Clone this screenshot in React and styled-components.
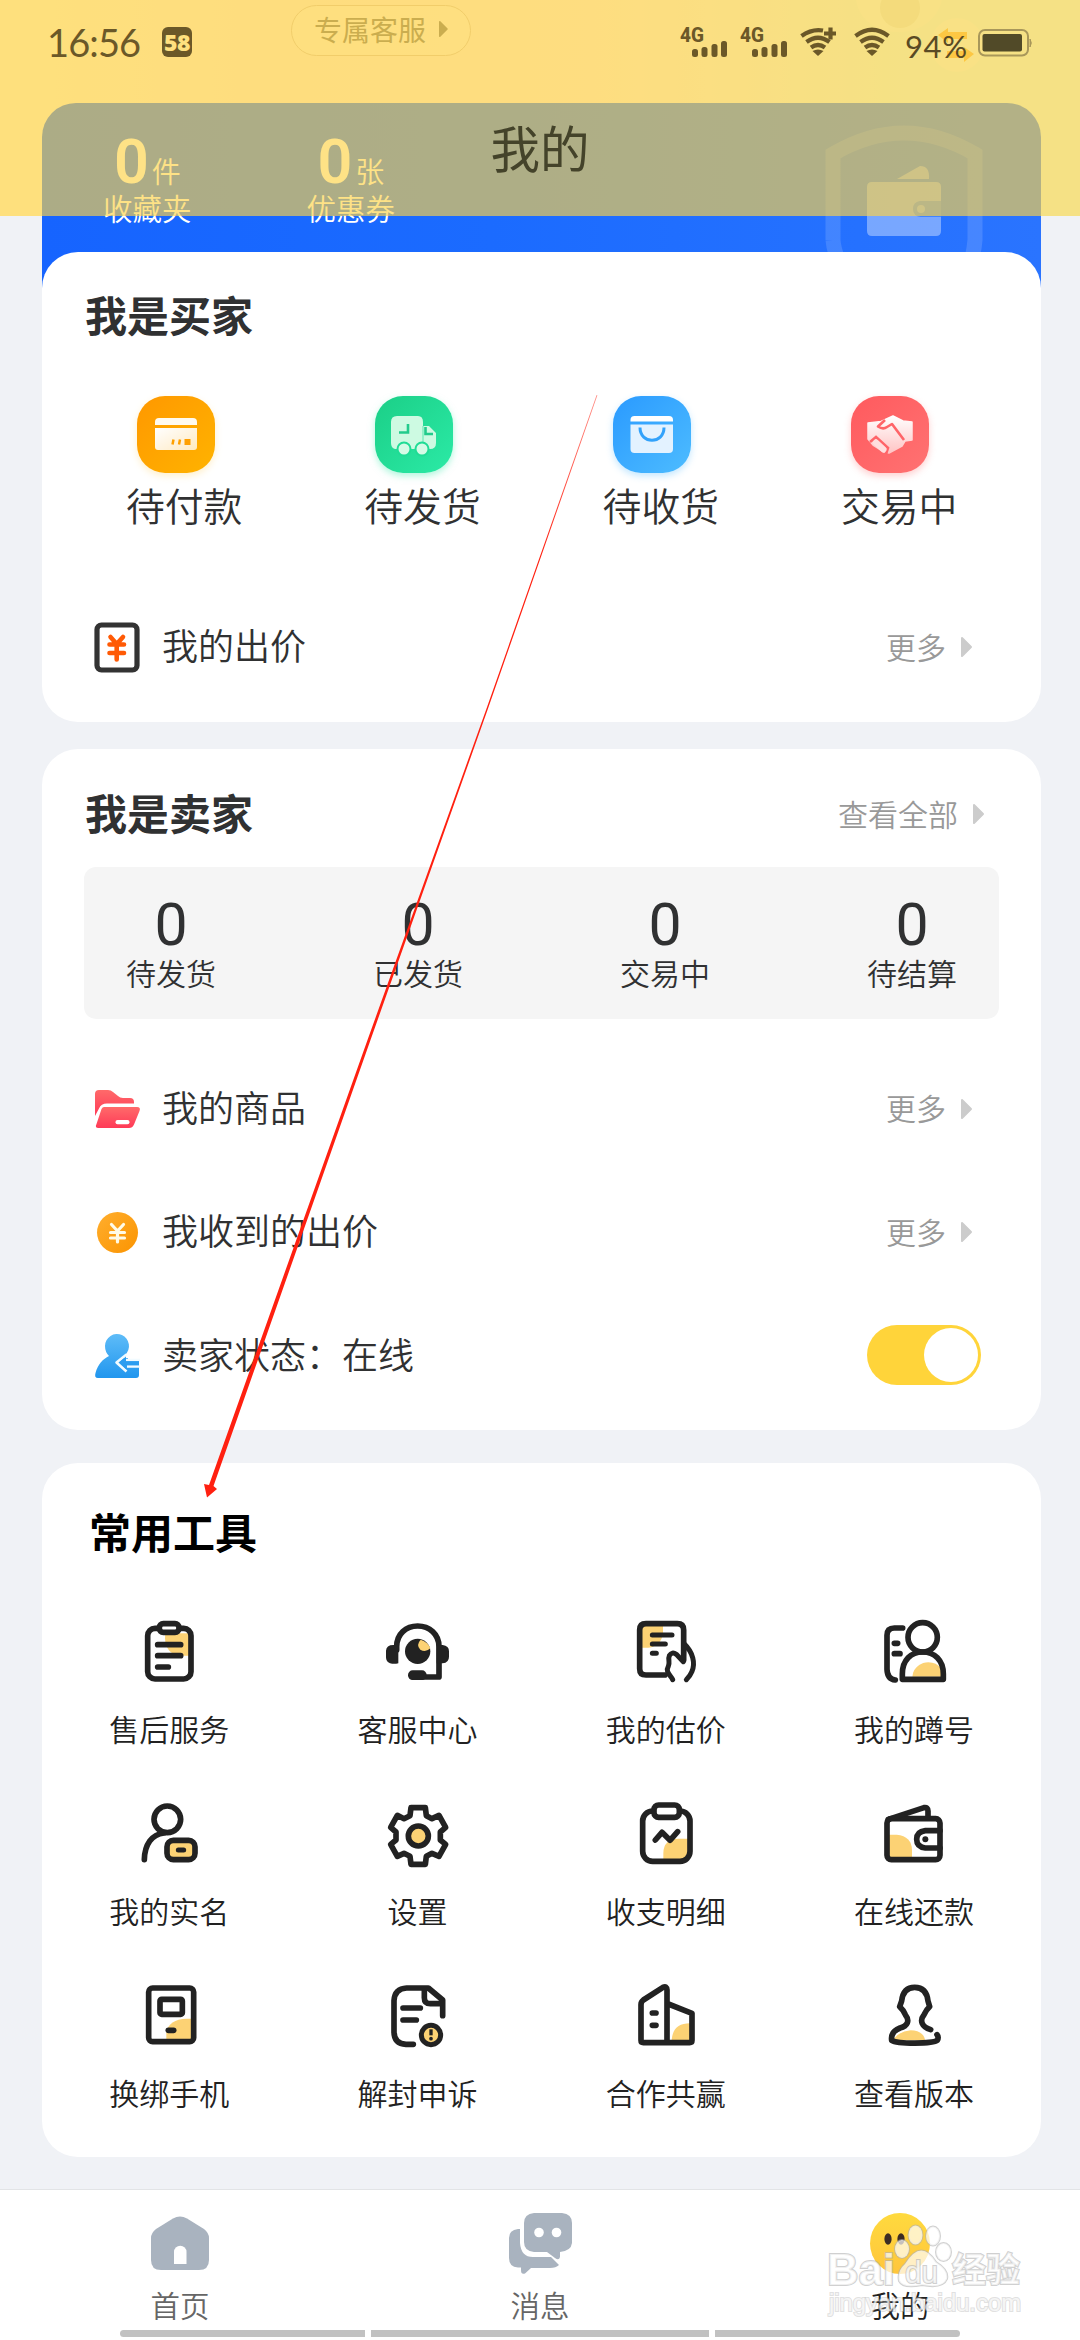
import React from "react";
import styled, { createGlobalStyle } from "styled-components";

const GlobalStyle = createGlobalStyle`
  *, *::before, *::after { box-sizing: border-box; }
  html, body { margin: 0; padding: 0; background: #f0f2f6; }
  body { font-family: "Noto Sans CJK SC", sans-serif; font-weight: 350; color: #303132; }
  svg { display: block; flex: none; overflow: visible; }
`;

const Page = styled.div`
  position: relative;
  width: 1080px;
  height: 2340px;
  overflow: hidden;
  display: flex;
  flex-direction: column;
  background: #f0f2f6;
`;

/* ---------- hero behind the translucent header ---------- */

const Hero = styled.section`
  flex: none;
  height: 252px;
  display: flex;
  flex-direction: column;
  align-items: flex-start;
  padding-top: 5px;
  background: linear-gradient(90deg, #fffae5 0%, #fff1e8 22%, #fff1ed 55%, #e4fcfb 84%, #e4fcfb 100%) 0 0 / 100% 216px no-repeat;
`;

const ServicePill = styled.div`
  height: 51px;
  width: 180px;
  margin-left: 291px;
  padding-bottom: 3px;
  flex: none;
  display: flex;
  align-items: center;
  justify-content: center;
  gap: 13px;
  border-radius: 26px;
  border: 1px solid #d9c3b0;
  background: rgba(255, 255, 240, 0.35);
  font-size: 28px;
  font-weight: 400;
  line-height: 40px;
  color: #6c6862;
  white-space: nowrap;
`;

const CoinArt = styled.svg`
  position: absolute;
  left: 840px;
  top: 0;
`;

const BlueCard = styled.div`
  flex: none;
  position: relative;
  width: 999px;
  height: 190px;
  margin: 47px 0 0 42px;
  padding: 30px 0 0 46px;
  display: flex;
  border-radius: 34px 34px 0 0;
  background: linear-gradient(90deg, #1664ff, #1b6bff 45%, #2a74ff);
  color: #fff;
`;

const ShieldArt = styled.svg`
  position: absolute;
  left: 783px;
  top: 20px;
`;

const Counter = styled.div`
  width: 203.5px;
  display: flex;
  flex-direction: column;
  padding-left: 15px;
`;

const CounterValue = styled.div`
  display: flex;
  align-items: baseline;
  gap: 3px;
  height: 57px;
  line-height: 58px;
  padding-left: 11px;
  font-size: 29px;
`;

const BigZero = styled.span`
  font: 600 61px/58px Roboto, sans-serif;
`;

const CounterLabel = styled.div`
  font-size: 29.5px;
  line-height: 34px;
`;

/* ---------- translucent header ---------- */

const Header = styled.header`
  position: absolute;
  inset: 0 0 auto 0;
  height: 216px;
  z-index: 5;
  display: flex;
  flex-direction: column;
  background: rgba(253, 210, 69, 0.65);
`;

const StatusBar = styled.div`
  height: 84px;
  display: flex;
  align-items: center;
  padding: 0 48px 0 47px;
  color: #6b5828;
`;

const Clock = styled.div`
  width: 115px;
  font: 400 38px/44px Lato, sans-serif;
  letter-spacing: -0.9px;
`;

const SpeedBadge = styled.div`
  width: 30px;
  height: 30px;
  border-radius: 6px;
  background: #6b5828;
  color: #ffe07f;
  font: 800 23px/31px "Open Sans", sans-serif;
  text-align: center;
  letter-spacing: -0.5px;
`;

const StatusRight = styled.div`
  margin-left: auto;
  display: flex;
  align-items: center;
`;

const BatteryText = styled.div`
  width: 73px;
  margin-left: -3px;
  padding-top: 7px;
  font: 400 31px/38px Lato, sans-serif;
  letter-spacing: 0.6px;
  white-space: nowrap;
  color: #5a4a24;
`;

const HeaderTitle = styled.h1`
  margin: 27px 0 0;
  font-size: 49.5px;
  line-height: 72px;
  font-weight: 400;
  text-align: center;
  color: #44432a;
`;

/* ---------- cards ---------- */

const Card = styled.section`
  position: relative;
  flex: none;
  width: 999px;
  height: ${(p) => p.$height}px;
  margin: ${(p) => p.$gap}px 0 0 42px;
  border-radius: 36px;
  background: #fff;
`;

const CardHead = styled.div`
  height: ${(p) => p.$height}px;
  display: flex;
  align-items: center;
  justify-content: space-between;
  padding: 0 57px 0 ${(p) => p.$left || 43}px;
`;

const CardTitle = styled.h2`
  margin: 0;
  padding-bottom: 5px;
  font-size: 42px;
  line-height: 60px;
  font-weight: 700;
  color: ${(p) => (p.$strong ? "#000" : "#303132")};
`;

const More = styled.span`
  display: flex;
  align-items: center;
  gap: 15px;
  font-size: 30px;
  line-height: 44px;
  color: #999;
`;

const MoreText = styled.span`
  padding-bottom: 3px;
`;

const OrderGrid = styled.div`
  display: grid;
  grid-template-columns: repeat(4, 238.3px);
  padding: 16px 0 0 84px;
`;

const OrderItem = styled.div`
  display: flex;
  flex-direction: column;
  align-items: flex-start;
  font-size: 38.8px;
  line-height: 56px;
`;

const OrderTile = styled.div`
  width: 78px;
  height: 77px;
  margin: 0 0 3px 10.5px;
  border-radius: 28px;
  background: linear-gradient(135deg, ${(p) => p.$from}, ${(p) => p.$to});
  box-shadow: 0 3px 7px ${(p) => p.$glow};
`;

const Row = styled.div`
  height: ${(p) => p.$height || 123.5}px;
  display: flex;
  align-items: center;
  padding: 0 ${(p) => p.$right || 69}px 0 50px;
`;

const RowIcon = styled.div`
  width: 50px;
  display: flex;
  justify-content: center;
  margin-right: 20px;
`;

const RowText = styled.div`
  flex: 1;
  padding-bottom: 6px;
  font-size: 36px;
  line-height: 52px;
`;

const Stats = styled.div`
  width: 915px;
  height: 152px;
  margin: -12px 0 28px 42px;
  padding: 30px 42px 0;
  display: flex;
  justify-content: space-between;
  border-radius: 12px;
  background: #f5f5f5;
`;

const Stat = styled.div`
  width: 90px;
  display: flex;
  flex-direction: column;
  align-items: center;
  font-size: 30px;
  line-height: 38px;
  white-space: nowrap;
`;

const StatValue = styled.div`
  font: 400 59px/56px Roboto, sans-serif;
`;

const Toggle = styled.div`
  width: 114px;
  height: 60px;
  margin-top: -2px;
  padding: 3px;
  display: flex;
  justify-content: flex-end;
  border-radius: 30px;
  background: #ffd43a;
`;

const Knob = styled.div`
  width: 54px;
  height: 54px;
  border-radius: 50%;
  background: #fff;
`;

const ToolGrid = styled.div`
  display: grid;
  grid-template-columns: repeat(4, 248.3px);
  grid-auto-rows: 182.2px;
  padding: 14px 0 0 3px;
`;

const Tool = styled.div`
  display: flex;
  flex-direction: column;
  align-items: center;
  gap: 24px;
  font-size: 30px;
  line-height: 40px;
  color: #222;
`;

/* ---------- bottom navigation ---------- */

const Nav = styled.nav`
  flex: none;
  height: 151px;
  margin-top: 32px;
  border-top: 1px solid #e2e4e6;
  background: #fff;
  display: grid;
  grid-template-columns: repeat(3, 360px);
`;

const NavItem = styled.div`
  display: flex;
  flex-direction: column;
  align-items: center;
  padding-top: 23px;
  gap: 8px;
  font-size: 29.5px;
  line-height: 42px;
  color: ${(p) => (p.$active ? "#222" : "#666")};
`;

const GestureBars = styled.div`
  position: absolute;
  left: 120px;
  top: 2330px;
  display: flex;
  gap: 6px;
`;

const GestureBar = styled.div`
  width: ${(p) => p.$width}px;
  height: 7px;
  background: #c1c1c1;
  border-radius: ${(p) => p.$radius || 0};
`;

const Overlay = styled.svg`
  position: absolute;
  left: 0;
  top: 0;
  z-index: 8;
  pointer-events: none;
`;

/* ---------- icons ---------- */

const Caret = ({ color = "#ccc", size = 20 }) => (
  <svg width={size * 0.55} height={size} viewBox="0 0 11 20">
    <path d="M1 1 L10 10 L1 19 Z" fill={color} stroke={color} strokeWidth="2" strokeLinejoin="round" />
  </svg>
);

const Signal = () => (
  <svg width="60" height="32" viewBox="0 0 60 32" fill="#6b5828">
    <text x="0" y="15.500" fontFamily="Roboto, sans-serif" fontWeight="800" fontSize="20" textLength="24" lengthAdjust="spacingAndGlyphs">4G</text>
    <rect x="12" y="23" width="6" height="8" rx="2.500" />
    <rect x="21.500" y="21" width="6" height="10" rx="2.500" />
    <rect x="31.500" y="18" width="6" height="13" rx="2.500" />
    <rect x="41" y="15" width="6" height="16" rx="2.500" />
  </svg>
);

const Wifi = ({ plus }) => (
  <svg width="54" height="30" viewBox="0 0 54 30" fill="none" stroke="#6b5828" strokeWidth="4.200">
    <path d={plus ? "M1.500 9 Q12 1.500 23 3.500" : "M1.500 9 Q18 -3.500 34.500 9"} />
    <path d="M6.500 15 Q18 6.500 29.500 15" />
    <path d="M11 20.500 Q18 15.500 25 20.500" />
    <path d="M12.500 24 Q18 21 23.500 24 L18 29 Z" fill="#6b5828" stroke="none" />
    {plus && <path d="M24 6.500 H36 M30.500 0.500 V12.500" />}
  </svg>
);

const Battery = () => (
  <svg width="54" height="28" viewBox="0 0 54 28">
    <rect x="1" y="2" width="49" height="25.500" rx="6" fill="none" stroke="#a8975a" strokeWidth="2" />
    <rect x="4.500" y="6" width="39.500" height="17.500" rx="2" fill="#514a28" />
    <path d="M52 11 q2.500 4 0 8 z" fill="#a8975a" stroke="#a8975a" />
  </svg>
);

const PayIcon = () => (
  <svg width="78" height="77" viewBox="0 0 78 77">
    <defs>
      <linearGradient id="pay" x1="0" y1="0" x2="1" y2="1">
        <stop offset="0" stopColor="#fff" />
        <stop offset="1" stopColor="#fff" stopOpacity=".76" />
      </linearGradient>
    </defs>
    <path d="M18 29 V26 q0-4 4-4 H56 q4 0 4 4 V29 Z" fill="#fffaf0" />
    <path d="M18 32 H60 V51 q0 3-3 3 H21 q-3 0-3-3 Z" fill="url(#pay)" />
    <path d="M36.500 43.500 l-1 5 M43 43.500 l-1 5" stroke="#ffa000" strokeWidth="2.500" />
    <rect x="47.500" y="43" width="6" height="6" fill="#ffa000" />
  </svg>
);

const TruckIcon = () => (
  <svg width="78" height="77" viewBox="0 0 78 77">
    <path d="M16 26 q0-6 6-6 H43 q5 0 5 6 V30 H54 L61 37 V47 q0 6-6 6 H20 q-4-1-4-6 Z" fill="#cdfae2" />
    <path d="M48 30 V48" stroke="#80eec0" strokeWidth="1.500" />
    <circle cx="29" cy="53" r="7.500" fill="#1fdc95" />
    <circle cx="47" cy="53" r="7.500" fill="#1fdc95" />
    <circle cx="29" cy="53" r="5.500" fill="#d5fbe6" />
    <circle cx="47" cy="53" r="5.500" fill="#d5fbe6" />
    <path d="M24 36.500 H33 V28 M50.500 31 V38 H58" fill="none" stroke="#22cb8c" strokeWidth="2.600" />
  </svg>
);

const BagIcon = () => (
  <svg width="78" height="77" viewBox="0 0 78 77">
    <path d="M17.500 25.500 V24 q0-4 4-4 H56 q4 0 4 4 V25.500 Z" fill="#fff" />
    <path d="M17.500 28.500 H60 V53 q0 4-4 4 H21.500 q-4 0-4-4 Z" fill="#e3f2ff" />
    <path d="M27 31.500 c0 17 24 17 24 0" fill="none" stroke="#32a2fb" strokeWidth="3" />
  </svg>
);

const ShakeIcon = () => (
  <svg width="78" height="77" viewBox="0 0 78 77">
    <defs>
      <linearGradient id="shake" x1="0" y1="0" x2="0" y2="1">
        <stop offset="0" stopColor="#fff" />
        <stop offset="1" stopColor="#ffc4c4" />
      </linearGradient>
    </defs>
    <path d="M17 27 L30 25.500 L42 20 L52 25 L61 26 V44 L54 45 L51 50 L38 57 L33 56 L22 49 L17 43 Z" fill="url(#shake)" stroke="url(#shake)" strokeLinejoin="round" strokeWidth="1.500" />
    <path d="M34 24 L27 30.500 q5 3.500 9 .5 L41 28 L53 44" fill="none" stroke="#ff6468" strokeWidth="2.600" strokeLinejoin="round" />
    <path d="M19 46 L25 41 L37 52 L35 58" fill="none" stroke="#ff6468" strokeWidth="2.600" />
    <path d="M25 46.500 L32.500 53.500" stroke="#ffdede" strokeWidth="6" strokeLinecap="round" />
  </svg>
);

const BidIcon = () => (
  <svg width="46" height="51" viewBox="0 0 46 51" fill="none">
    <rect x="3" y="3" width="40" height="45" rx="4.500" stroke="#333" strokeWidth="5.200" />
    <path d="M16.500 15 L22.700 22 L29 15 M15.500 22.500 H30 M15.500 31 H30 M22.700 22 V37.500" stroke="#ff5a05" strokeWidth="4.600" strokeLinecap="round" />
  </svg>
);

const FolderIcon = () => (
  <svg width="45" height="38" viewBox="0 0 45 38">
    <defs>
      <linearGradient id="fold" x1="0" y1="0" x2="0" y2="1">
        <stop offset="0" stopColor="#ff6a6a" />
        <stop offset="1" stopColor="#ff3a57" />
      </linearGradient>
    </defs>
    <path d="M0 26 V4 q0-4 4-4 H13 q3 0 5 2 l5 4 q2 2 5 2 H35 q4 0 4 4 V13.500 H12 q-6 0-8 5 Z" fill="url(#fold)" />
    <path d="M9 17 H42 q4 0 2.500 4 L39 34.500 q-1.500 3.500-5 3.500 H3.500 q-4 0-2-4 L6.500 19 q1-2 2.500-2 Z" fill="url(#fold)" />
    <rect x="20.500" y="30" width="14" height="4.200" rx="2" fill="#fff" />
  </svg>
);

const CoinIcon = () => (
  <svg width="41" height="41" viewBox="0 0 41 41">
    <defs>
      <linearGradient id="coin" x1="0" y1="0" x2="1" y2="1">
        <stop offset="0" stopColor="#ffae2e" />
        <stop offset="1" stopColor="#fb9400" />
      </linearGradient>
    </defs>
    <circle cx="20.500" cy="20.500" r="20.500" fill="url(#coin)" />
    <path d="M14.500 12.500 L20.500 19 L26.500 12.500 M13.500 20.500 H27.500 M13.500 26 H27.500 M20.500 19 V30" stroke="#fffbe8" strokeWidth="3.200" fill="none" strokeLinecap="round" />
  </svg>
);

const SellerIcon = () => (
  <svg width="44" height="44" viewBox="0 0 44 44">
    <defs>
      <linearGradient id="seller" x1="0" y1="0" x2="0" y2="1">
        <stop offset="0" stopColor="#5ebcf8" />
        <stop offset="1" stopColor="#2196ee" />
      </linearGradient>
    </defs>
    <path d="M10 12 a12 12 0 1 1 20 9 l-1 3 H44 V41 q0 3-3 3 H3 q-4 0-2.500-5 C3 30 8 25 14 22 Q10 18 10 12 Z" fill="url(#seller)" />
    <path d="M45 23 V26.500 H33 V22 Z" fill="#fff" />
    <path d="M31.500 20.500 L21.500 28.500 L31.500 37.500 M45 26 H31 M45 32.500 H32" fill="none" stroke="#f2fbff" strokeWidth="2.600" strokeLinejoin="round" />
    <path d="M24 28.500 L31 22.500 V27.300 H44 V31.200 H31 V35 Z" fill="#2c9df0" />
  </svg>
);

const Y = "#fcd274";
const INK = "#222";

const ToolSvg = ({ box, children }) => (
  <svg width="66" height="66" viewBox={box} fill="none" stroke={INK} strokeWidth="17" strokeLinecap="round" strokeLinejoin="round">
    {children}
  </svg>
);

const tools = [
  ["售后服务", "168 414 198 198", (
    <>
      <path d="M256 460 H333 V527 H300 C272 525 256 505 255 475 Z" fill={Y} stroke="none" />
      <rect x="203" y="445" width="130" height="152" rx="22" />
      <rect x="238" y="431" width="59" height="26" rx="12" fill="#fff" />
      <path d="M233 494 H302 M233 527 H302 M233 561 H265" />
    </>
  )],
  ["客服中心", "912 414 198 198", (
    <>
      <path d="M950 510 V500 C950 462 978 438 1013 438 S1077 462 1077 500 V591 H1000" />
      <path d="M955 495 V550 Q942 553 930 550 Q918 545 918 532 V512 Q919 495 940 495 Z M1070 495 H1088 Q1107 497 1107 514 V530 Q1107 548 1088 550 H1070 Z" fill={INK} stroke="none" />
      <rect x="984" y="571" width="56" height="29" rx="14" fill={INK} stroke="none" />
      <circle cx="1013" cy="514" r="38" fill={INK} stroke="none" />
      <path d="M1022 479 Q1045 487 1051 505 Q1037 519 1021 509 Q1007 495 1022 479 Z" fill={Y} stroke="none" />
    </>
  )],
  ["我的估价", "216 54 198 198", (
    <>
      <path d="M243 78 H306 V100 Q300 140 262 143 H243 Z" fill={Y} stroke="none" />
      <path d="M312 225 H255 Q236 225 236 206 V90 Q236 71 255 71 H349 Q368 71 368 90 V180" />
      <path d="M274 105 H333 M274 132 H313 M274 160 H286" strokeWidth="15" />
      <path d="M335 239 C329 226 312 216 322 199 C328 188 320 178 325 167 Q333 154 346 163 L367 185 L369 131 C397 158 403 190 393 214 Q388 227 376 239" strokeWidth="15" />
    </>
  )],
  ["我的蹲号", "963 54 198 198", (
    <>
      <path d="M1057 230 C1060 200 1085 187 1105 187 Q1130 187 1143 205 V230 Z" fill={Y} stroke="none" />
      <circle cx="1088" cy="112" r="44" />
      <path d="M1027 238 V222 C1027 180 1053 156 1088 156 S1150 180 1150 222 V238 Z" />
      <path d="M1028 84 H1003 Q981 84 981 106 V208 Q982 237 1006 240 M1003 130 H1013 M1003 161 H1020" />
    </>
  )],
  ["我的实名", "168 61 198 198", (
    <>
      <circle cx="262" cy="119" r="40" />
      <path d="M193 240 C194 195 215 164 252 160" />
      <rect x="261" y="182" width="84" height="58" rx="19" fill={Y} />
      <path d="M295 211 H311" strokeWidth="15" />
    </>
  )],
  ["设置", "912 61 198 198", (
    <>
      <path d="M993 84 H1036 L1039 108 L1056 117 L1077 107 L1097 143 L1081 157 V181 L1097 194 L1077 230 L1056 221 L1039 230 L1036 254 H993 L990 230 L972 221 L952 230 L932 194 L948 181 V157 L932 143 L952 107 L972 117 L990 108 Z" />
      <circle cx="1015" cy="169" r="30" fill={Y} />
    </>
  )],
  ["收支明细", "216 61 198 198", (
    <>
      <path d="M307 240 V220 Q308 178 352 177 H384 V240 Z" fill={Y} stroke="none" />
      <rect x="245" y="94" width="142" height="151" rx="30" />
      <rect x="279" y="76" width="76" height="37" rx="14" fill="#fff" />
      <path d="M283 181 L303 158 L327 182 L350 156" />
    </>
  )],
  ["在线还款", "963 61 198 198", (
    <>
      <path d="M987 165 H1010 Q1056 170 1056 212 V234 H987 Z" fill={Y} stroke="none" />
      <rect x="981" y="117" width="159" height="123" rx="13" />
      <path d="M985 119 L1092 84 Q1104 82 1104 94 V112 M1140 153 H1096 Q1070 156 1070 179 T1096 205 H1140" />
      <circle cx="1096" cy="179" r="9" fill={INK} stroke="none" />
    </>
  )],
  ["换绑手机", "168 608 198 198", (
    <>
      <path d="M259 782 V760 Q266 719 320 718 H336 V782 Z" fill={Y} stroke="none" />
      <rect x="206" y="626" width="135" height="161" rx="12" />
      <rect x="240" y="660" width="67" height="45" rx="5" />
      <path d="M265 753 H281" />
    </>
  )],
  ["解封申诉", "912 608 198 198", (
    <>
      <path d="M1000 795 H978 Q942 793 942 757 V664 Q944 628 980 626 H1045 L1088 662 V709 M1033 630 V655 Q1033 673 1051 673 H1084 M969 686 H1021 M969 722 H1009" />
      <circle cx="1053" cy="767" r="29" fill={Y} strokeWidth="15" />
      <path d="M1053 750 V768" strokeWidth="10" strokeLinecap="butt" />
      <circle cx="1053" cy="778" r="5.500" fill={INK} stroke="none" />
    </>
  )],
  ["合作共赢", "216 608 198 198", (
    <>
      <path d="M332 784 C334 750 350 732 387 732 V784 Z" fill={Y} stroke="none" />
      <path d="M318 790 V632 Q317 618 306 624 L247 662 Q240 667 240 676 V783 Q240 790 247 790 H386 Q393 790 393 783 V702 L322 674 M274 701 H285 M274 738 H285" />
    </>
  )],
  ["查看版本", "963 608 198 198", (
    <>
      <path d="M999 783 Q1015 756 1052 753 Q1092 755 1095 783 Z" fill={Y} stroke="none" />
      <path d="M1112 751 C1085 742 1078 724 1092 706 Q1100 690 1109 682 L1104 665 C1101 638 1088 624 1064 624 S1028 638 1025 665 L1019 682 Q1030 692 1036 706 C1050 724 1043 740 1020 746 C997 755 993 769 995 783 C1012 794 1118 794 1132 783 Q1137 773 1131 766" />
    </>
  )],
];

const HomeIcon = () => (
  <svg width="60" height="62" viewBox="0 0 60 62">
    <path d="M23 5.500 Q30 1.500 37 5.500 L54 16 Q59 20 59 25 V47 Q59 57 49 57 H11 Q1 57 1 47 V25 Q1 20 6 16 Z" fill="#a9b3bf" />
    <path d="M24 51 V39 a6 6 0 0 1 12.500 0 V51 Z" fill="#fff" />
  </svg>
);

const ChatIcon = () => (
  <svg width="64" height="62" viewBox="0 0 64 62" fill="#a9b3bf">
    <path d="M10 16 H12 V30 Q13 44 25 44 H43 L51 52 Q48 55 42 55 H23 L17 60.500 Q13 62 13 57 V54.500 H10 Q1 54 1 45 V25 Q1 17 10 16 Z" />
    <path d="M26 0 H54 Q64 1 64 10 V30 Q63 38 52 39 V44 Q51 48 47 45 L39 39 H26 Q16 38 16 29 V10 Q16 1 26 0 Z" />
    <circle cx="31" cy="19.500" r="4.800" fill="#fff" />
    <circle cx="48.500" cy="19.500" r="4.800" fill="#fff" />
  </svg>
);

const FaceIcon = () => (
  <svg width="60" height="62" viewBox="0 0 60 62">
    <defs>
      <linearGradient id="face" x1="0" y1="0" x2="0" y2="1">
        <stop offset="0" stopColor="#ffda3e" />
        <stop offset="1" stopColor="#ffc53c" />
      </linearGradient>
    </defs>
    <ellipse cx="30" cy="30.500" rx="30" ry="30.500" fill="url(#face)" />
    <ellipse cx="18" cy="26" rx="3.600" ry="5.800" fill="#3c2c24" />
    <ellipse cx="31" cy="26" rx="3.600" ry="5.800" fill="#3c2c24" />
  </svg>
);

const orders = [
  { label: "待付款", from: "#ff9800", to: "#ffb300", glow: "#ffd98066", Icon: PayIcon },
  { label: "待发货", from: "#1bcf87", to: "#2beaa6", glow: "#6beebf88", Icon: TruckIcon },
  { label: "待收货", from: "#2a9aff", to: "#4dbcff", glow: "#7fccff77", Icon: BagIcon },
  { label: "交易中", from: "#ff5a5e", to: "#ff7272", glow: "#ff9a9a77", Icon: ShakeIcon },
];

const counters = [
  { unit: "件", label: "收藏夹" },
  { unit: "张", label: "优惠券" },
];

const stats = ["待发货", "已发货", "交易中", "待结算"];

const MoreLink = ({ children = "更多" }) => (
  <More><MoreText>{children}</MoreText><Caret /></More>
);

export default function App() {
  return (
    <Page>
      <GlobalStyle />
      <Hero>
        <CoinArt width="160" height="90" viewBox="840 0 160 90">
          <path d="M856 0 C862 42 932 44 942 0" fill="#fff" opacity=".35" />
          <ellipse cx="900" cy="8" rx="20" ry="20" fill="#cfd0b8" opacity=".4" />
          <circle cx="957" cy="45" r="27" fill="#fff" opacity=".4" />
          <path d="M938 35 l10 -7 v4 h19 v7 h-19 v4 z M974 54 l-10 -7 v4 h-17 v7 h17 v4 z" fill="#ff9a00" opacity=".75" />
        </CoinArt>
        <ServicePill>专属客服<Caret color="#6c6862" size={16} /></ServicePill>
        <BlueCard>
          {counters.map(({ unit, label }) => (
            <Counter key={label}>
              <CounterValue><BigZero>0</BigZero>{unit}</CounterValue>
              <CounterLabel>{label}</CounterLabel>
            </Counter>
          ))}
          <ShieldArt width="158" height="140" viewBox="825 123 158 140">
            <path d="M833 240 V154 Q904 112 975 154 V240 Q973 262 966 272 M833 240 Q834 254 845 275" fill="none" stroke="#fff" strokeOpacity=".14" strokeWidth="15" />
            <path d="M897 179 L920 166 Q930 166 929 179 Z" fill="#fff" fillOpacity=".38" />
            <path d="M872 182 H936 Q941 182 941 187 V201 H920 Q913 202 913 209 T921 217 H941 V231 Q941 236 936 236 H872 Q867 236 867 231 V187 Q867 182 872 182 Z" fill="#fff" fillOpacity=".38" />
            <path d="M941 201 H920 Q913 202 913 209 T921 217 H941 Z" fill="#fff" fillOpacity=".12" />
            <circle cx="921" cy="209" r="4" fill="#fff" fillOpacity=".3" />
          </ShieldArt>
        </BlueCard>
      </Hero>

      <Card $height={470} $gap={0}>
        <CardHead $height={128}><CardTitle>我是买家</CardTitle></CardHead>
        <OrderGrid>
          {orders.map(({ label, from, to, glow, Icon }) => (
            <OrderItem key={label}>
              <OrderTile $from={from} $to={to} $glow={glow}><Icon /></OrderTile>
              {label}
            </OrderItem>
          ))}
        </OrderGrid>
        <Row $height={230}>
          <RowIcon><BidIcon /></RowIcon>
          <RowText>我的出价</RowText>
          <MoreLink />
        </Row>
      </Card>

      <Card $height={681} $gap={27}>
        <CardHead $height={130}>
          <CardTitle>我是卖家</CardTitle>
          <MoreLink>查看全部</MoreLink>
        </CardHead>
        <Stats>
          {stats.map((label) => (
            <Stat key={label}><StatValue>0</StatValue>{label}</Stat>
          ))}
        </Stats>
        <Row><RowIcon><FolderIcon /></RowIcon><RowText>我的商品</RowText><MoreLink /></Row>
        <Row><RowIcon><CoinIcon /></RowIcon><RowText>我收到的出价</RowText><MoreLink /></Row>
        <Row $right={60}>
          <RowIcon><SellerIcon /></RowIcon>
          <RowText>卖家状态：在线</RowText>
          <Toggle><Knob /></Toggle>
        </Row>
      </Card>

      <Card $height={694} $gap={33}>
        <CardHead $height={141} $left={47}><CardTitle $strong>常用工具</CardTitle></CardHead>
        <ToolGrid>
          {tools.map(([label, box, art]) => (
            <Tool key={label}><ToolSvg box={box}>{art}</ToolSvg>{label}</Tool>
          ))}
        </ToolGrid>
      </Card>

      <Nav>
        <NavItem><HomeIcon />首页</NavItem>
        <NavItem><ChatIcon />消息</NavItem>
        <NavItem $active><FaceIcon />我的</NavItem>
      </Nav>

      <Header>
        <StatusBar>
          <Clock>16:56</Clock>
          <SpeedBadge>58</SpeedBadge>
          <StatusRight>
            <Signal />
            <Signal />
            <Wifi plus />
            <Wifi />
            <BatteryText>94%</BatteryText>
            <Battery />
          </StatusRight>
        </StatusBar>
        <HeaderTitle>我的</HeaderTitle>
      </Header>

      <GestureBars>
        <GestureBar $width={245} $radius="4px 0 0 4px" />
        <GestureBar $width={338} />
        <GestureBar $width={245} $radius="0 4px 4px 0" />
      </GestureBars>

      <Overlay width="1080" height="2340" viewBox="0 0 1080 2340">
        <defs>
          <linearGradient id="pointer" gradientUnits="userSpaceOnUse" x1="597" y1="395" x2="540" y2="556">
            <stop offset="0" stopColor="#ff2010" stopOpacity=".5" />
            <stop offset="1" stopColor="#ff2010" />
          </linearGradient>
        </defs>
        <path d="M596.600 395 L597.400 395.200 L487.500 710 L370.500 1040 L213.500 1486 L217 1489 L207 1497.500 L204 1484 L209 1485 L367.500 1040 L486 710 Z" fill="url(#pointer)" />
        <g fill="#fff" fillOpacity=".7" stroke="#b0b0b0" strokeOpacity=".6" strokeWidth="2" paintOrder="stroke" fontFamily="'Liberation Sans', sans-serif">
          <text x="827" y="2285" fontSize="44" fontWeight="700" textLength="68" lengthAdjust="spacingAndGlyphs">Bai</text>
          <path d="M905 2264 Q921 2238 936 2262 Q949 2270 947 2279 Q943 2289 922 2285 Q903 2289 899 2281 Q897 2271 905 2264 Z" />
          <ellipse cx="902" cy="2249" rx="7" ry="9" />
          <ellipse cx="915.500" cy="2235" rx="7" ry="9.500" />
          <ellipse cx="933" cy="2236" rx="7" ry="9.500" />
          <ellipse cx="943.500" cy="2252" rx="7.500" ry="9" />
          <text x="905" y="2283" fontSize="31" fontWeight="400" textLength="33" lengthAdjust="spacingAndGlyphs">du</text>
          <text x="952" y="2282" fontSize="34" fontWeight="700" fontFamily="'Noto Sans CJK SC', sans-serif">经验</text>
          <text x="829" y="2311" fontSize="23" strokeOpacity=".4" textLength="192" lengthAdjust="spacingAndGlyphs">jingyan.baidu.com</text>
        </g>
      </Overlay>
    </Page>
  );
}
